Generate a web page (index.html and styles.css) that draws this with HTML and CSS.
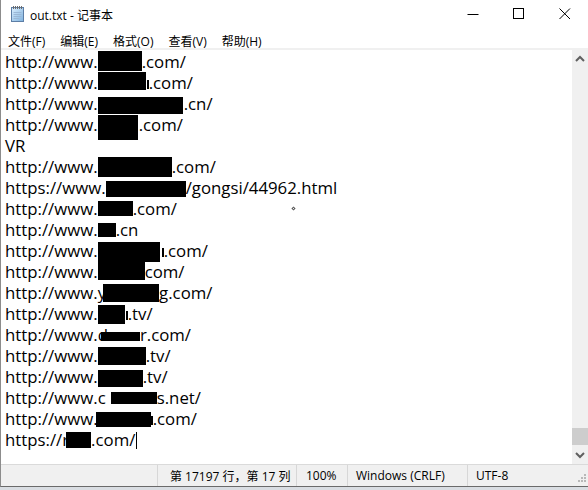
FILE: index.html
```html
<!DOCTYPE html>
<html lang="zh-CN">
<head>
<meta charset="utf-8">
<title>out.txt - 记事本</title>
<link rel="stylesheet" href="styles.css">
</head>
<body>
<div class="window">
  <div class="titlebar">
    <svg class="app-icon" width="16" height="17" viewBox="0 0 16 17">
      <defs>
        <linearGradient id="pg" x1="0" y1="0" x2="1" y2="1">
          <stop offset="0" stop-color="#dcefff"/>
          <stop offset="1" stop-color="#7fb2de"/>
        </linearGradient>
      </defs>
      <rect x="2.5" y="2.5" width="12" height="14" fill="url(#pg)" stroke="#5d7ea6"/>
      <path d="M4.5 7.5h8M4.5 9.5h8M4.5 11.5h8M4.5 13.5h6" stroke="#9bb7d6" stroke-width="1"/>
      <path d="M4.5 1v3M6.5 1v3M8.5 1v3M10.5 1v3M12.5 1v3" stroke="#6b6b6b" stroke-width="1"/>
    </svg>
    <span class="title">out.txt - 记事本</span>
    <div class="controls">
      <span class="ctl"><svg width="12" height="12" viewBox="0 0 12 12"><path d="M0.5 6.5h11" stroke="#000" stroke-width="1"/></svg></span>
      <span class="ctl"><svg width="12" height="12" viewBox="0 0 12 12"><rect x="0.5" y="0.5" width="10" height="10" fill="none" stroke="#000"/></svg></span>
      <span class="ctl"><svg width="12" height="12" viewBox="0 0 12 12"><path d="M0.5 0.5l10.5 10.5M11 0.5L0.5 11" stroke="#000" stroke-width="1"/></svg></span>
    </div>
  </div>
  <div class="menubar">
    <span class="menu">文件(F)</span>
    <span class="menu">编辑(E)</span>
    <span class="menu">格式(O)</span>
    <span class="menu">查看(V)</span>
    <span class="menu">帮助(H)</span>
  </div>
  <div class="editor">
    <div class="text">
      <div class="line">http://www.<span class="r" style="--w:44px;--t:0px;--h:20px"></span>.com/</div>
      <div class="line">http://www.<span class="r tail" style="--w:51px;--bw:48px;--t:0px;--h:18px"></span>.com/</div>
      <div class="line">http://www.<span class="r" style="--w:86px;--bw:85px;--t:4px;--h:17px"></span>.cn/</div>
      <div class="line">http://www.<span class="r" style="--w:41px;--bw:40px;--t:1px;--h:25px"></span>.com/</div>
      <div class="line">VR</div>
      <div class="line">http://www.<span class="r" style="--w:74px;--t:1px;--h:20px"></span>.com/</div>
      <div class="line">https://www.<span class="r" style="--w:80px;--t:4px;--h:16px"></span>/gongsi/44962.html</div>
      <div class="line">http://www.<span class="r" style="--w:35px;--t:3px;--h:15px"></span>.com/</div>
      <div class="line">http://www.<span class="r" style="--w:18px;--t:4px;--h:14px"></span>.cn</div>
      <div class="line">http://www.<span class="r tail" style="--w:66px;--bw:62px;--t:2px;--h:20px"></span>.com/</div>
      <div class="line">http://www.<span class="r" style="--w:47px;--t:-1px;--h:20px"></span>com/</div>
      <div class="line">http://www.y<span class="r" style="--w:56px;--ml:-3px;--t:2px;--h:18px"></span>g.com/</div>
      <div class="line">http://www.<span class="r tail" style="--w:30px;--bw:27px;--t:2px;--h:19px"></span>.tv/</div>
      <div class="line">http://www.d<span class="r" style="--w:39px;--ml:-7px;--t:8px;--h:9px"></span>r.com/</div>
      <div class="line">http://www.<span class="r" style="--w:48px;--t:2px;--h:18px"></span>.tv/</div>
      <div class="line">http://www.<span class="r" style="--w:45px;--t:4px;--h:17px"></span>.tv/</div>
      <div class="line">http://www.c<span class="r" style="--w:51px;--l:5px;--t:5px;--h:12px"></span>s.net/</div>
      <div class="line">http://www.<span class="r tail" style="--w:57px;--bw:55px;--ml:-2px;--t:4px;--h:15px"></span>.com/</div>
      <div class="line">https://r<span class="r" style="--w:25px;--ml:-3px;--t:3px;--h:16px"></span>.com/<span class="caret"></span></div>
      <span class="pointer-dot"></span>
    </div>
    <div class="scrollbar">
      <svg class="arrow" width="16" height="16" viewBox="0 0 16 16"><path d="M4 10l4-4 4 4" fill="none" stroke="#606060" stroke-width="2"/></svg>
      <div class="track"><div class="thumb"></div></div>
      <svg class="arrow" width="16" height="16" viewBox="0 0 16 16"><path d="M4 6l4 4 4-4" fill="none" stroke="#606060" stroke-width="2"/></svg>
    </div>
  </div>
  <div class="statusbar">
    <div class="cell c1">第 17197 行，第 17 列</div>
    <div class="cell c2">100%</div>
    <div class="cell c3">Windows (CRLF)</div>
    <div class="cell c4">UTF-8</div>
    <svg class="grip" width="12" height="12" viewBox="0 0 12 12">
      <g fill="#b8b8b8">
        <rect x="9" y="1" width="2" height="2"/>
        <rect x="6" y="4" width="2" height="2"/><rect x="9" y="4" width="2" height="2"/>
        <rect x="3" y="7" width="2" height="2"/><rect x="6" y="7" width="2" height="2"/><rect x="9" y="7" width="2" height="2"/>
      </g>
    </svg>
  </div>
</div>
</body>
</html>
```
FILE: styles.css
```css
* { box-sizing: border-box; }
html, body { margin: 0; padding: 0; }
body {
  width: 588px;
  height: 490px;
  overflow: hidden;
  background: #d9dde2;
  font-family: "Open Sans", "Noto Sans CJK SC", sans-serif;
}
.window {
  width: 588px;
  height: 487px;
  display: flex;
  flex-direction: column;
  background: #fff;
  border-left: 1px solid #8c8c8c;
  border-bottom: 1px solid #6a6a6a;
}
.titlebar {
  height: 31px;
  display: flex;
  align-items: center;
  flex-shrink: 0;
}
.app-icon { margin: 0 5px 0 8px; position: relative; top: -2px; }
.title {
  font-size: 12px;
  color: #000;
  position: relative;
  top: -1px;
}
.controls {
  margin-left: auto;
  display: flex;
  height: 100%;
}
.ctl {
  width: 46px;
  display: flex;
  align-items: center;
  justify-content: center;
  padding-bottom: 4px;
}
.menubar {
  height: 17px;
  display: flex;
  align-items: center;
  padding-left: 7px;
  flex-shrink: 0;
  border-bottom: 2px solid #f0f0f0;
  box-sizing: content-box;
}
.menu {
  font-size: 12px;
  color: #000;
  margin-right: 15px;
  position: relative;
  top: 1px;
}
.editor {
  flex: 1;
  display: flex;
  min-height: 0;
}
.text {
  flex: 1;
  position: relative;
  padding: 1px 0 0 4px;
  font-size: 16.8px;
  line-height: 21px;
  color: #000;
  white-space: nowrap;
  overflow: hidden;
}
.line { height: 21px; }
.r {
  display: inline-block;
  vertical-align: top;
  width: var(--w);
  margin-left: var(--ml, 0px);
  height: 21px;
  position: relative;
}
.r::before {
  content: "";
  position: absolute;
  left: var(--l, 0px);
  width: var(--bw, calc(100% - var(--l, 0px)));
  top: var(--t, 0px);
  height: var(--h, 20px);
  background: #000;
}
.r.tail::after {
  content: "";
  position: absolute;
  right: 0;
  top: 8px;
  width: 2px;
  height: 9px;
  background: #000;
}
.caret {
  display: inline-block;
  width: 1px;
  height: 17px;
  background: #000;
  vertical-align: top;
  margin-top: 3px;
  margin-left: 1px;
}
.pointer-dot {
  position: absolute;
  left: 291px;
  top: 157px;
  width: 3px;
  height: 3px;
  border: 1px solid #555;
  transform: rotate(45deg);
  background: #fff;
}
.scrollbar {
  width: 16px;
  background: #f0f0f0;
  display: flex;
  flex-direction: column;
  flex-shrink: 0;
}
.arrow { display: block; flex-shrink: 0; margin: 1px 0; }
.track {
  flex: 1;
  display: flex;
  flex-direction: column;
  justify-content: flex-end;
}
.thumb {
  height: 17px;
  background: #cdcdcd;
  margin: 0 0 1px 0;
}
.statusbar {
  height: 22px;
  flex-shrink: 0;
  display: flex;
  align-items: center;
  background: #f0f0f0;
  border-top: 1px solid #dadada;
  font-size: 12px;
  color: #000;
  padding-left: 156px;
  position: relative;
}
.cell {
  height: 100%;
  display: flex;
  align-items: center;
  border-left: 1px solid #d7d7d7;
  white-space: nowrap;
}
.c1 { width: 139px; padding-left: 12px; }
.c2 { width: 51px; padding-left: 9px; }
.c3 { width: 120px; padding-left: 8px; }
.c4 { width: 105px; padding-left: 8px; }
.grip { margin-left: auto; margin-right: 1px; align-self: flex-end; margin-bottom: 1px; }
```
